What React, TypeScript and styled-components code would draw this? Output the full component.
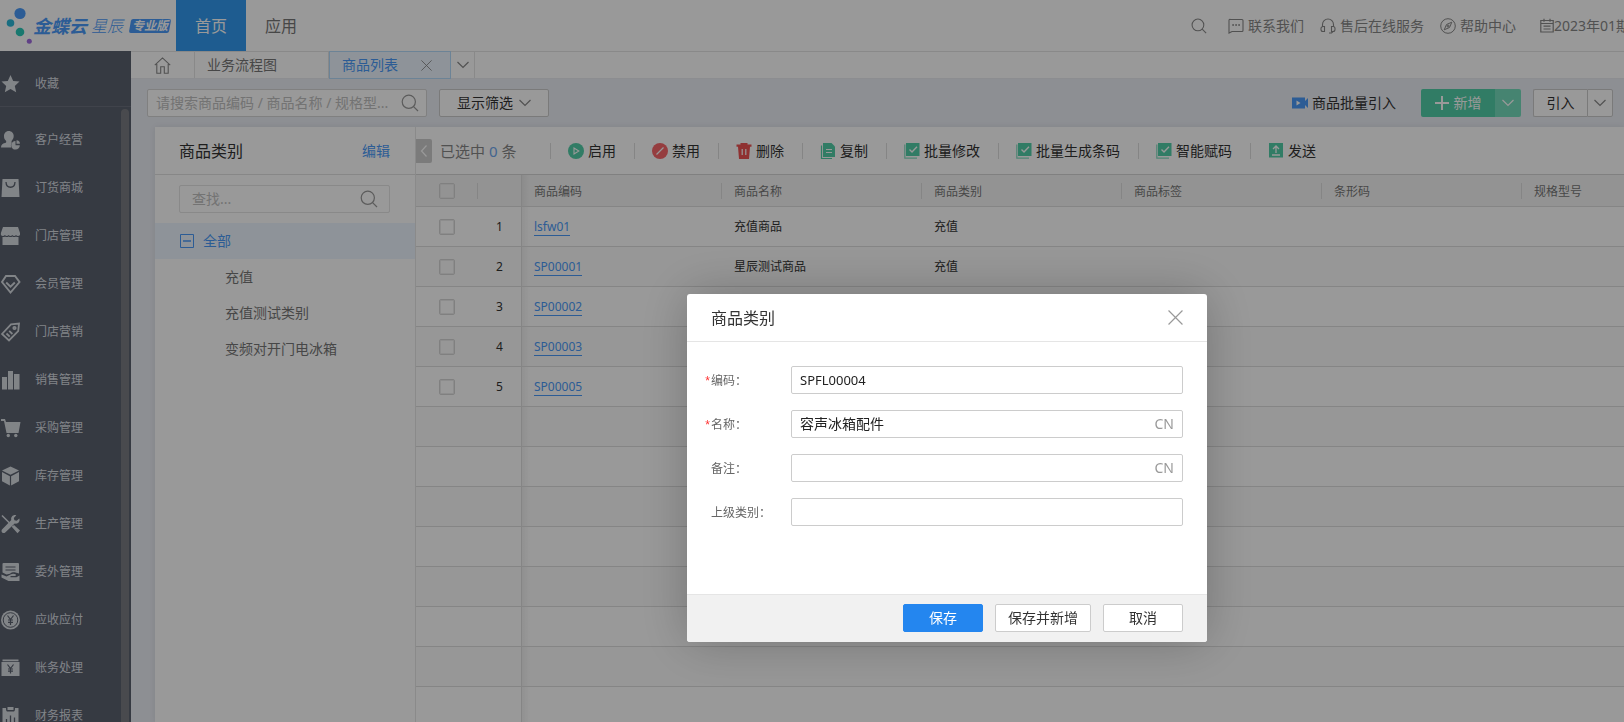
import React from "react";
import styled, { createGlobalStyle, css } from "styled-components";

const GlobalStyle = createGlobalStyle`
  * { box-sizing: border-box; }
  body {
    margin: 0;
    font-family: "Noto Sans", "Noto Sans CJK SC", sans-serif;
    font-size: 14px;
    line-height: 20px;
    color: #333;
  }
  button, input { font: inherit; color: inherit; }
  button { padding: 0; margin: 0; border: 0; background: none; cursor: pointer; }
  a { color: inherit; text-decoration: none; }
  svg { display: block; flex: none; }
`;

const BLUE = "#4a9af8";
const GREEN = "#52cfa8";

/* ---------- shell ---------- */

const Page = styled.div`
  display: flex;
  flex-direction: column;
  height: 100vh;
  overflow: hidden;
  background: #ebeef5;
`;

const Header = styled.header`
  display: flex;
  flex: none;
  align-items: center;
  height: 51px;
  background: #fff;
  overflow: hidden;
`;

const Logo = styled.a`
  display: flex;
  align-items: center;
  flex: none;
  width: 176px;
  height: 51px;
  color: ${BLUE};
  font-style: italic;
  white-space: nowrap;
`;

const Brand = styled.span`
  font-size: 18px;
  font-weight: 700;
`;

const SubBrand = styled.span`
  margin-left: 4px;
  font-size: 16px;
  font-weight: 300;
`;

const Edition = styled.span`
  position: relative;
  z-index: 0;
  margin-left: 7px;
  padding: 0 2px;
  font-size: 12px;
  line-height: 14px;
  font-weight: 700;
  color: #fff;
  &::before {
    content: "";
    position: absolute;
    inset: 0;
    z-index: -1;
    border-radius: 2px;
    background: ${BLUE};
    transform: skewX(-10deg);
  }
`;

const MainNav = styled.nav`
  display: flex;
  height: 100%;
`;

const NavLink = styled.a<{ $active?: boolean }>`
  display: flex;
  align-items: center;
  justify-content: center;
  width: 70px;
  font-size: 16px;
  color: ${(p) => (p.$active ? "#fff" : "#777")};
  background: ${(p) => (p.$active ? "#329af0" : "transparent")};
`;

const HeaderTools = styled.div`
  display: flex;
  flex: 1;
  justify-content: flex-end;
  align-items: center;
  color: #888;
`;

const ToolLink = styled.a`
  display: flex;
  flex: none;
  align-items: center;
  gap: 4px;
  margin-right: 16px;
  white-space: nowrap;
`;

const SearchLink = styled(ToolLink)`
  margin-right: 21px;
`;

const Period = styled.a`
  display: flex;
  flex: 0 0 84px;
  align-items: center;
  margin-left: 8px;
  overflow: hidden;
  white-space: nowrap;
`;

const Body = styled.div`
  display: flex;
  flex: 1;
  min-height: 0;
`;

/* ---------- side menu ---------- */

const Sidebar = styled.aside`
  display: flex;
  flex-direction: column;
  flex: 0 0 131px;
  color: #d8dce2;
  background: #5a616e;
  font-size: 12px;
`;

const Favorites = styled.div`
  display: flex;
  flex: none;
  height: 56px;
  padding-top: 11px;
  border-bottom: 1px solid #6b717d;
`;

const MenuScroll = styled.nav`
  display: flex;
  flex: 1;
  min-height: 0;
  overflow: hidden;
  padding: 2px 2px 0 0;
`;

const MenuList = styled.div`
  flex: 1;
  padding-top: 7px;
`;

const ScrollThumb = styled.div`
  width: 8px;
  border-radius: 4px 4px 0 0;
  background: #7b7c83;
`;

const MenuItem = styled.a<{ $compact?: boolean }>`
  display: flex;
  align-items: center;
  gap: 14px;
  height: ${(p) => (p.$compact ? 44 : 48)}px;
`;

/* ---------- work area ---------- */

const Work = styled.main`
  display: flex;
  flex: 1;
  flex-direction: column;
  min-width: 0;
`;

const TabBar = styled.div`
  display: flex;
  flex: none;
  height: 28px;
  background: #fff;
  border-top: 1px solid #e4e4e4;
  border-bottom: 1px solid #e9ebf0;
  color: #777;
`;

const tabBase = css`
  display: flex;
  align-items: center;
  border-right: 1px solid #e4e4e4;
`;

const HomeTab = styled.button`
  ${tabBase}
  justify-content: center;
  width: 64px;
  color: #888;
`;

const Tab = styled.div<{ $active?: boolean }>`
  ${tabBase}
  justify-content: space-between;
  width: ${(p) => (p.$active ? 122 : 134)}px;
  padding: 0 18px 0 12px;
  ${(p) =>
    p.$active &&
    css`
      margin: -1px 0;
      color: ${BLUE};
      background: #edf6ff;
      border: 1px solid #b5dafb;
    `}
`;

const TabClose = styled.button`
  color: #888;
`;

const MoreTabs = styled.button`
  ${tabBase}
  justify-content: center;
  width: 24px;
  color: #888;
`;

const Toolbar = styled.div`
  display: flex;
  flex: none;
  align-items: center;
  height: 48px;
  padding: 0 11px 0 16px;
`;

const SearchBox = styled.label<{ $wide?: boolean }>`
  display: flex;
  align-items: center;
  flex: none;
  width: ${(p) => (p.$wide ? "280px" : "auto")};
  height: 28px;
  padding: ${(p) => (p.$wide ? "0 7px 0 8px" : "0 11px 0 12px")};
  border: 1px solid ${(p) => (p.$wide ? "#d5d5d5" : "#e4e4e4")};
  border-radius: 2px;
  background: #fff;
  color: #999;
  input {
    flex: 1;
    width: 0;
    min-width: 0;
    padding: 0;
    border: 0;
    outline: 0;
    background: none;
  }
  input::placeholder { color: #c0c0c0; opacity: 1; }
`;

const PlainButton = styled.button`
  display: flex;
  align-items: center;
  justify-content: center;
  height: 28px;
  border: 1px solid #ccc;
  border-radius: 2px;
  background: #fff;
  svg { color: #888; }
`;

const FilterButton = styled(PlainButton)`
  gap: 6px;
  width: 110px;
  margin-left: 12px;
`;

const BatchImport = styled.a`
  display: flex;
  align-items: center;
  gap: 4px;
  margin: 0 25px 0 auto;
`;

const AddGroup = styled.div`
  display: flex;
  height: 28px;
  margin-right: 12px;
  border-radius: 2px;
  overflow: hidden;
  color: #fff;
`;

const AddButton = styled.button`
  display: flex;
  align-items: center;
  justify-content: center;
  gap: 5px;
  width: 74px;
  background: ${GREEN};
`;

const AddMore = styled.button`
  display: flex;
  align-items: center;
  justify-content: center;
  width: 26px;
  background: #76dcbc;
`;

const ImportButton = styled(PlainButton)`
  width: 54px;
  border-right: 0;
  border-radius: 2px 0 0 2px;
`;

const ImportMore = styled(PlainButton)`
  width: 26px;
  border-radius: 0 2px 2px 0;
`;

const Panels = styled.div`
  display: flex;
  flex: 1;
  min-height: 0;
  margin-left: 24px;
  background: #fff;
  box-shadow: 0 0 6px rgba(0, 0, 0, 0.08);
`;

const Categories = styled.section`
  flex: 0 0 261px;
  min-width: 0;
  border-right: 1px solid #e6e6e6;
`;

const CategoryHead = styled.div`
  display: flex;
  align-items: center;
  justify-content: space-between;
  height: 48px;
  padding: 0 25px 0 24px;
  border-bottom: 1px solid #e2e2e2;
`;

const Heading = styled.h2`
  margin: 0;
  font-size: 16px;
  font-weight: 400;
`;

const TextLink = styled.a`
  color: ${BLUE};
`;

const CategorySearch = styled.div`
  padding: 10px 25px 10px 24px;
`;

const Tree = styled.ul`
  margin: 0;
  padding: 0;
  list-style: none;
`;

const TreeRoot = styled.li`
  display: flex;
  align-items: center;
  gap: 9px;
  height: 36px;
  padding-left: 25px;
  color: ${BLUE};
  background: #edf6ff;
`;

const TreeChild = styled.li`
  height: 36px;
  padding: 8px 0 8px 70px;
  color: #777;
`;

const ListPanel = styled.section`
  flex: 1;
  min-width: 0;
  overflow: hidden;
`;

const ActionBar = styled.div`
  display: flex;
  align-items: center;
  height: 48px;
  border-bottom: 1px solid #d6d6d6;
`;

const Collapse = styled.button`
  display: flex;
  align-items: center;
  justify-content: center;
  width: 16px;
  height: 24px;
  border-radius: 0 2px 2px 0;
  background: #cecece;
  color: #fff;
`;

const Selected = styled.span`
  width: 118px;
  padding-left: 8px;
  font-size: 15px;
  color: #888;
  b { font-weight: 400; color: #6fa8ef; }
`;

const Action = styled.button`
  display: flex;
  align-items: center;
  gap: 4px;
  height: 16px;
  padding: 0 18px 0 17px;
  border-left: 1px solid #dedede;
  white-space: nowrap;
`;

const Grid = styled.table`
  width: 100%;
  table-layout: fixed;
  border-collapse: separate;
  border-spacing: 0;
  font-size: 12px;
`;

const HeadCell = styled.th<{ $sep?: boolean }>`
  height: 32px;
  padding: 2px 0 0 12px;
  text-align: left;
  font-weight: 400;
  color: #777;
  border-bottom: 1px solid #dedede;
  background: ${(p) =>
    p.$sep
      ? "linear-gradient(#dedede, #dedede) right center / 1px 16px no-repeat, #f6f6f6"
      : "#f6f6f6"};
`;

const Cell = styled.td`
  height: 40px;
  padding: 0 0 0 12px;
  border-bottom: 1px solid #dedede;
`;

const checkPad = css`
  padding: 0;
  text-align: center;
`;

const CheckHead = styled(HeadCell)`${checkPad}`;
const CheckCell = styled(Cell)`${checkPad}`;

const NumHead = styled(HeadCell)`
  border-right: 1px solid #dedede;
`;

const NumCell = styled(Cell)`
  padding: 0;
  text-align: center;
  border-right: 1px solid #dedede;
`;

const freezeShadow = css`
  background-image: linear-gradient(90deg, rgba(0, 0, 0, 0.05), transparent 8px);
`;

const CodeHead = styled(HeadCell)`
  background: linear-gradient(#dedede, #dedede) right center / 1px 16px no-repeat,
    linear-gradient(90deg, rgba(0, 0, 0, 0.05), transparent 8px), #f6f6f6;
`;
const CodeCell = styled(Cell)`${freezeShadow}`;

const Row = styled.tr`
  &:nth-child(even) { background: #fcfcfc; }
`;

const CodeLink = styled.a`
  display: inline-block;
  line-height: 16px;
  color: ${BLUE};
  border-bottom: 1px solid ${BLUE};
`;

const CheckBox = styled.input`
  appearance: none;
  display: block;
  width: 16px;
  height: 16px;
  margin: 0 auto;
  border: 1px solid #d6d6d6;
  border-radius: 2px;
  background: transparent;
  box-shadow: inset 0 0 0 1px #ebebeb;
`;

/* ---------- dialog ---------- */

const Mask = styled.div`
  position: fixed;
  inset: 0;
  display: flex;
  justify-content: center;
  align-items: flex-start;
  padding: 294px 0 0 270px;
  background: rgba(0, 0, 0, 0.4);
`;

const Dialog = styled.section`
  flex: none;
  width: 520px;
  border-radius: 3px;
  overflow: hidden;
  background: #fff;
  box-shadow: 0 0 50px rgba(0, 0, 0, 0.24);
`;

const DialogHead = styled.div`
  display: flex;
  align-items: center;
  justify-content: space-between;
  height: 48px;
  padding: 0 24px;
  border-bottom: 1px solid #e5e5e5;
`;

const CloseButton = styled.button`
  color: #999;
`;

const Form = styled.form`
  display: flex;
  flex-direction: column;
  gap: 16px;
  min-height: 252px;
  padding: 24px;
`;

const Field = styled.div`
  display: flex;
  align-items: center;
`;

const Label = styled.label`
  position: relative;
  flex: 0 0 80px;
  padding-top: 2px;
  font-size: 12px;
  color: #666;
`;

const Star = styled.span`
  position: absolute;
  right: 100%;
  padding-right: 1px;
  font-family: "Liberation Sans", sans-serif;
  color: #f33;
`;

const InputBox = styled.div<{ $latin?: boolean }>`
  display: flex;
  flex: 1;
  align-items: center;
  height: 28px;
  padding: 0 8px;
  border: 1px solid #ccc;
  border-radius: 2px;
  font-size: ${(p) => (p.$latin ? 13 : 14)}px;
  input {
    flex: 1;
    min-width: 0;
    padding: 0;
    border: 0;
    outline: 0;
    color: #222;
    background: none;
  }
`;

const Lang = styled.span`
  color: #999;
`;

const DialogFoot = styled.div`
  display: flex;
  align-items: flex-start;
  justify-content: flex-end;
  gap: 12px;
  height: 48px;
  padding: 9px 24px 0;
  border-top: 1px solid #e5e5e5;
  background: #f1f1f1;
`;

const FootButton = styled(PlainButton)<{ $primary?: boolean }>`
  min-width: 80px;
  padding: 0 12px;
  ${(p) =>
    p.$primary &&
    css`
      color: #fff;
      border-color: #2486ef;
      background: #2486ef;
    `}
`;

/* ---------- icons ---------- */

const LogoMark = () => (
  <svg width="33" height="50" viewBox="0 0 33 50">
    <circle cx="20" cy="12.5" r="5.6" fill={BLUE} />
    <circle cx="10.5" cy="22" r="3.8" fill="#2bb7d8" />
    <circle cx="20" cy="31" r="4.3" fill="#2bc9b9" />
    <circle cx="29.3" cy="40.3" r="2.5" fill="#a06be0" />
  </svg>
);

const Magnifier = ({ size = 18 }: { size?: number }) => (
  <svg width={size} height={size} viewBox="0 0 18 18" fill="none" stroke="currentColor" strokeWidth="1.2">
    <circle cx="7.8" cy="7.8" r="6.6" />
    <path d="M12.6 12.6 17 17" />
  </svg>
);

const Chevron = ({ dir = "down" }: { dir?: "down" | "left" }) =>
  dir === "down" ? (
    <svg width="12" height="8" viewBox="0 0 12 8" fill="none" stroke="currentColor" strokeWidth="1.2">
      <path d="M.5 1 6 6.5 11.5 1" />
    </svg>
  ) : (
    <svg width="8" height="12" viewBox="0 0 8 12" fill="none" stroke="currentColor" strokeWidth="1.2">
      <path d="M6.5.5 1.5 6l5 5.5" />
    </svg>
  );

const Cross = ({ size }: { size: number }) => (
  <svg width={size} height={size} viewBox="0 0 14 14" fill="none" stroke="currentColor" strokeWidth="1.1">
    <path d="M.5.5l13 13M13.5.5l-13 13" />
  </svg>
);

const HomeIcon = () => (
  <svg width="17" height="17" viewBox="0 0 17 17" fill="none" stroke="currentColor" strokeWidth="1.1">
    <path d="M.8 8.2 8.5.9l7.7 7.3M2.8 7v9.2h3.9V9.8h3.6v6.400h3.900V7" />
  </svg>
);

const ChatIcon = () => (
  <svg width="16" height="16" viewBox="0 0 16 16" fill="none" stroke="currentColor" strokeWidth="1.1">
    <path d="M2.500 1.500h11.500a1 1 0 0 1 1 1v10a1 1 0 0 1-1 1H4L1 15V2.500a1 1 0 0 1 1.500-1z" />
    <path d="M4.200 7h1.800M7.200 7H9M10.200 7H12" strokeWidth="1.6" />
  </svg>
);

const HeadsetIcon = () => (
  <svg width="16" height="16" viewBox="0 0 16 16" fill="none" stroke="currentColor" strokeWidth="1.1">
    <path d="M2.500 8.500V6.500a5.500 5.500 0 0 1 11 0v2M4.500 8v5.500H3a2 2 0 0 1-2-2v-1a2 2 0 0 1 2-2h1.500M11.500 8v5.500H13a2 2 0 0 0 2-2v-1a2 2 0 0 0-2-2h-1.500M13 13.500 11.500 15H9" />
  </svg>
);

const CompassIcon = () => (
  <svg width="16" height="16" viewBox="0 0 16 16" fill="none" stroke="currentColor" strokeWidth="1">
    <circle cx="8" cy="8" r="7.3" />
    <path d="M11.800 4.200 9.500 9.500 4.200 11.800 6.500 6.500z" />
    <circle cx="8" cy="8" r="1" />
  </svg>
);

const CalendarIcon = () => (
  <svg width="14" height="16" viewBox="0 0 14 16" fill="none" stroke="currentColor" strokeWidth="1.2">
    <path d="M.8 2.500h12.400V14H.8zM.8 5.500h12.400M4 .8v3M10 .8v3M3.500 8.200h7M3.500 11h7" />
  </svg>
);

const VideoIcon = () => (
  <svg width="16" height="12" viewBox="0 0 16 12" fill={BLUE}>
    <path d="M0 .5h13v11H0zM13 4l3-3v10l-3-3z" />
    <path d="M4.500 3.500v5L8.500 6z" fill="#fff" />
  </svg>
);

const PlusIcon = () => (
  <svg width="14" height="14" viewBox="0 0 14 14" stroke="currentColor" strokeWidth="2">
    <path d="M7 0v14M0 7h14" />
  </svg>
);

const MinusBox = () => (
  <svg width="14" height="14" viewBox="0 0 14 14" fill="none" stroke={BLUE}>
    <path d="M.5.5h13v13H.5z" />
    <path d="M3 7h8" strokeWidth="1.5" />
  </svg>
);

const EnableIcon = () => (
  <svg width="16" height="16" viewBox="0 0 16 16">
    <circle cx="8" cy="8" r="8" fill={GREEN} />
    <path d="M6 5v6l4.800-3z" fill="none" stroke="#fff" strokeWidth="1.1" />
  </svg>
);

const DisableIcon = () => (
  <svg width="16" height="16" viewBox="0 0 16 16">
    <circle cx="8" cy="8" r="8" fill="#f8666a" />
    <path d="M4.500 11.500l7-7" stroke="#fff" strokeWidth="1.3" />
  </svg>
);

const TrashIcon = () => (
  <svg width="16" height="16" viewBox="0 0 16 16" fill="#ee5353">
    <path d="M4.500 0h7v1.500h4v2.200h-1.500L13 16H3L2 3.700H.5V1.500h4z" />
    <path d="M6.200 6v6M9.800 6v6" stroke="#fff" strokeWidth="1.2" />
  </svg>
);

const CopyIcon = () => (
  <svg width="16" height="16" viewBox="0 0 16 16">
    <path d="M1.500 2.500v13H12" fill="none" stroke={GREEN} strokeWidth="1.2" />
    <path d="M3 0h8.500L15 3.500V14H3z" fill={GREEN} />
    <path d="M6 6.500h6M6 9.500h6" stroke="#fff" strokeWidth="1.2" />
  </svg>
);

const BatchIcon = () => (
  <svg width="16" height="16" viewBox="0 0 16 16">
    <path d="M.8 1.500v13.700H13" fill="none" stroke={GREEN} strokeWidth="1.2" opacity=".7" />
    <path d="M2 0h13.500v13H2z" fill={GREEN} />
    <path d="M5.500 6.500 8 9l5-5.200" fill="none" stroke="#fff" strokeWidth="1.4" />
  </svg>
);

const SendIcon = () => (
  <svg width="16" height="16" viewBox="0 0 16 16">
    <path d="M1 0h14v14.500H1z" fill={GREEN} />
    <path d="M8 10V3.500M5 6l3-3 3 3M4 12h8" fill="none" stroke="#fff" strokeWidth="1.3" />
  </svg>
);

const HOLE = "#5a616e";

const menuIcons: Record<string, React.ReactNode> = {
  star: <path d="M10.500 1l2.700 5.900 6.300.7-4.700 4.300 1.400 6.300L10.500 15l-5.700 3.200 1.400-6.300L1.500 7.600l6.300-.7z" />,
  customer: (
    <>
      <path d="M8.700 1c3 0 5 2.200 5 5 0 2-.9 3.800-2 4.700-.4 1.400 0 1.500 0 2.500-1 1.500-1 3-.3 4.300H1c0-3 1.500-3.800 4-4.500 1.300-.4 1.500-1.200 1-2.300C4.500 9.800 4 8 4 6c0-2.800 2-5 4.700-5z" />
      <path d="M15.500 11v4.200h4.300A4.300 4.300 0 1 1 15.500 11z" />
      <path d="M16.500 10.200a3.600 3.600 0 0 1 3.400 3.600h-3.400z" />
    </>
  ),
  bag: (
    <>
      <path d="M2.500 1h16l1 18h-18z" />
      <path d="M6 4c.3 7 8.700 7 9 0" fill="none" stroke={HOLE} strokeWidth="1.3" />
    </>
  ),
  store: (
    <>
      <path d="M3 1h15l2 6v2c-1 1.200-3 1.200-4 0-1 1.200-2.700 1.200-3.700 0-1 1.200-2.700 1.200-3.700 0-1 1.200-2.700 1.200-3.700 0-1 1.200-3 1.200-4 0V7z" />
      <path d="M2.500 11c1 .3 2 0 2.500-.5 1 .8 2.700.8 3.700 0 1 .8 2.700.8 3.700 0 1 .8 2.700.8 3.600 0 .7.500 1.500.8 2.500.5v8h-16z" />
    </>
  ),
  diamond: (
    <g fill="none" stroke="currentColor" strokeWidth="1.9">
      <path d="M6 2h9l4.500 6-9 10.500-8.500-10.500z" />
      <path d="M6.200 8.500l4.300 4.200 4.300-4.200" />
    </g>
  ),
  tag: (
    <g fill="none" stroke="currentColor" strokeWidth="1.8">
      <path d="M2 12 11 2.300l8-.8-.8 7.700L9 18.500zM6.500 11.500l3.200 3.200M9.200 8.800l3.200 3.200" />
      <circle cx="14.500" cy="6" r="1.2" />
    </g>
  ),
  bars: <path d="M2 7h5v12.500H2zM8 1h5v18.500H8zM14 4h5.500v15.500H14z" />,
  cart: (
    <>
      <path d="M1 1h4l1 3h14.500l-2 11H6.500L4 3H1z" />
      <circle cx="8.300" cy="17.500" r="1.700" />
      <circle cx="15.800" cy="17.500" r="1.700" />
    </>
  ),
  box: <path d="M10.500.5l8.500 4-8.500 4.200L2 4.500zM2 6l7.900 4.200v9.300L2 15.200zM19 6v9.200l-7.900 4.300v-9.300z" />,
  tools: (
    <>
      <path d="M2 1.500 9.500 9M12.500 12l5.500 5.500" stroke="currentColor" strokeWidth="1.6" />
      <path d="M12 13l2-2 6 5.500-2.500 2.800z" />
      <path d="M19.300 4.500l-2.600 2.300-2.300-.6-.6-2.300L16.300 1.200c-3-.9-5.800 1.500-5 4.800L2 15.500c-.8 1-.5 2.300.2 3 .8.800 2.200.8 3 0l9.500-9c3.300.8 5.700-2 4.600-5z" />
    </>
  ),
  handDoc: (
    <>
      <path d="M3.500 1h14.500a1 1 0 0 1 1 1v9.500L15.500 10.500c-2-.4-4 0-5.500 1.200L6.500 12.500l-4-2V2a1 1 0 0 1 1-1z" />
      <path d="M5.500 5h10M5.500 8h10" stroke={HOLE} strokeWidth="1" />
      <path d="M1.500 12.500l5 2 4-2c2-1 4-.8 5.500 0l-.5 1.500h-5v1.200h6l3-1.700V19h-11l-7-3.500z" />
    </>
  ),
  coin: (
    <>
      <circle cx="10.500" cy="10" r="9.500" />
      <circle cx="10.500" cy="10" r="7.300" fill="none" stroke={HOLE} />
      <path d="M7.500 5.500l3 4 3-4M10.500 9.500v5.500M8 10h5M8 12.300h5" fill="none" stroke={HOLE} strokeWidth="1.2" />
    </>
  ),
  ledger: (
    <>
      <path d="M2.500 1.500h16v1.700h-16zM1.500 4h18v14h-18z" />
      <path d="M7.500 6.500l3 4 3-4M10.500 10.500v5M8 11h5M8 13.200h5" fill="none" stroke={HOLE} strokeWidth="1.2" />
    </>
  ),
  report: (
    <>
      <path d="M2.500 2H6c0 3 .5 3.500 2 3.500h5c1.500 0 2-.5 2-3.500h3.500v17h-16z" />
      <path d="M7.500 1h6v3h-6z" />
      <path d="M6.500 13v6M10.500 9.500V19M14.500 11.500V19" stroke={HOLE} strokeWidth="1.3" />
    </>
  ),
};

const MenuIcon = ({ name }: { name: string }) => (
  <svg width="21" height="20" viewBox="0 0 21 20" fill="currentColor">
    {menuIcons[name]}
  </svg>
);

/* ---------- data ---------- */

const menu = [
  ["customer", "客户经营"],
  ["bag", "订货商城"],
  ["store", "门店管理"],
  ["diamond", "会员管理"],
  ["tag", "门店营销"],
  ["bars", "销售管理"],
  ["cart", "采购管理"],
  ["box", "库存管理"],
  ["tools", "生产管理"],
  ["handDoc", "委外管理"],
  ["coin", "应收应付"],
  ["ledger", "账务处理"],
  ["report", "财务报表"],
];

const actions: [React.ReactNode, string][] = [
  [<EnableIcon />, "启用"],
  [<DisableIcon />, "禁用"],
  [<TrashIcon />, "删除"],
  [<CopyIcon />, "复制"],
  [<BatchIcon />, "批量修改"],
  [<BatchIcon />, "批量生成条码"],
  [<BatchIcon />, "智能赋码"],
  [<SendIcon />, "发送"],
];

const products = [
  { code: "lsfw01", name: "充值商品", category: "充值" },
  { code: "SP00001", name: "星辰测试商品", category: "充值" },
  { code: "SP00002", name: "", category: "" },
  { code: "SP00003", name: "", category: "" },
  { code: "SP00005", name: "", category: "" },
];

const blankRows = Array.from({ length: 12 }, (_, i) => i);

const fields = [
  { id: "code", label: "编码：", value: "SPFL00004", required: true, lang: false, latin: true },
  { id: "name", label: "名称：", value: "容声冰箱配件", required: true, lang: true, latin: false },
  { id: "remark", label: "备注：", value: "", required: false, lang: true, latin: false },
  { id: "parent", label: "上级类别：", value: "", required: false, lang: false, latin: false },
];

/* ---------- page ---------- */

const TopBar = () => (
  <Header>
    <Logo href="#">
      <LogoMark />
      <Brand>金蝶云</Brand>
      <SubBrand>星辰</SubBrand>
      <Edition>专业版</Edition>
    </Logo>
    <MainNav>
      <NavLink href="#" $active>首页</NavLink>
      <NavLink href="#">应用</NavLink>
    </MainNav>
    <HeaderTools>
      <SearchLink href="#" aria-label="搜索"><Magnifier size={16} /></SearchLink>
      <ToolLink href="#"><ChatIcon />联系我们</ToolLink>
      <ToolLink href="#"><HeadsetIcon />售后在线服务</ToolLink>
      <ToolLink href="#"><CompassIcon />帮助中心</ToolLink>
      <Period href="#"><CalendarIcon />2023年01期</Period>
    </HeaderTools>
  </Header>
);

const SideMenu = () => (
  <Sidebar>
    <Favorites>
      <MenuItem href="#" $compact><MenuIcon name="star" />收藏</MenuItem>
    </Favorites>
    <MenuScroll>
      <MenuList>
        {menu.map(([icon, text]) => (
          <MenuItem href="#" key={text}><MenuIcon name={icon} />{text}</MenuItem>
        ))}
      </MenuList>
      <ScrollThumb />
    </MenuScroll>
  </Sidebar>
);

const CategoryPanel = () => (
  <Categories>
    <CategoryHead>
      <Heading>商品类别</Heading>
      <TextLink href="#">编辑</TextLink>
    </CategoryHead>
    <CategorySearch>
      <SearchBox>
        <input placeholder="查找..." aria-label="查找" />
        <Magnifier />
      </SearchBox>
    </CategorySearch>
    <Tree>
      <TreeRoot><MinusBox />全部</TreeRoot>
      <TreeChild>充值</TreeChild>
      <TreeChild>充值测试类别</TreeChild>
      <TreeChild>变频对开门电冰箱</TreeChild>
    </Tree>
  </Categories>
);

const ProductList = () => (
  <ListPanel>
    <ActionBar>
      <Collapse aria-label="收起"><Chevron dir="left" /></Collapse>
      <Selected>已选中 <b>0</b> 条</Selected>
      {actions.map(([icon, text]) => (
        <Action key={text}>{icon}{text}</Action>
      ))}
    </ActionBar>
    <Grid>
      <colgroup>
        <col width="62" />
        <col width="44" />
        <col width="200" />
        <col width="200" />
        <col width="200" />
        <col width="200" />
        <col width="200" />
        <col />
      </colgroup>
      <thead>
        <tr>
          <CheckHead $sep><CheckBox type="checkbox" aria-label="全选" /></CheckHead>
          <NumHead />
          <CodeHead>商品编码</CodeHead>
          <HeadCell $sep>商品名称</HeadCell>
          <HeadCell $sep>商品类别</HeadCell>
          <HeadCell $sep>商品标签</HeadCell>
          <HeadCell $sep>条形码</HeadCell>
          <HeadCell>规格型号</HeadCell>
        </tr>
      </thead>
      <tbody>
        {products.map((p, i) => (
          <Row key={p.code}>
            <CheckCell><CheckBox type="checkbox" aria-label={p.code} /></CheckCell>
            <NumCell>{i + 1}</NumCell>
            <CodeCell><CodeLink href="#">{p.code}</CodeLink></CodeCell>
            <Cell>{p.name}</Cell>
            <Cell>{p.category}</Cell>
            <Cell /><Cell /><Cell />
          </Row>
        ))}
        {blankRows.map((i) => (
          <Row key={i}>
            <CheckCell /><NumCell /><CodeCell /><Cell /><Cell /><Cell /><Cell /><Cell />
          </Row>
        ))}
      </tbody>
    </Grid>
  </ListPanel>
);

const CategoryDialog = () => (
  <Mask>
    <Dialog role="dialog" aria-modal="true" aria-labelledby="dialog-title">
      <DialogHead>
        <Heading id="dialog-title">商品类别</Heading>
        <CloseButton aria-label="关闭"><Cross size={15} /></CloseButton>
      </DialogHead>
      <Form id="category-form">
        {fields.map((f) => (
          <Field key={f.id}>
            <Label htmlFor={f.id}>
              {f.required && <Star>*</Star>}
              {f.label}
            </Label>
            <InputBox $latin={f.latin}>
              <input id={f.id} defaultValue={f.value} />
              {f.lang && <Lang>CN</Lang>}
            </InputBox>
          </Field>
        ))}
      </Form>
      <DialogFoot>
        <FootButton $primary>保存</FootButton>
        <FootButton>保存并新增</FootButton>
        <FootButton>取消</FootButton>
      </DialogFoot>
    </Dialog>
  </Mask>
);

export default function App() {
  return (
    <>
      <GlobalStyle />
      <Page>
        <TopBar />
        <Body>
          <SideMenu />
          <Work>
            <TabBar>
              <HomeTab aria-label="主页"><HomeIcon /></HomeTab>
              <Tab>业务流程图</Tab>
              <Tab $active>
                商品列表
                <TabClose aria-label="关闭标签"><Cross size={11} /></TabClose>
              </Tab>
              <MoreTabs aria-label="更多标签"><Chevron /></MoreTabs>
            </TabBar>
            <Toolbar>
              <SearchBox $wide>
                <input placeholder="请搜索商品编码 / 商品名称 / 规格型..." aria-label="搜索商品" />
                <Magnifier />
              </SearchBox>
              <FilterButton>显示筛选<Chevron /></FilterButton>
              <BatchImport href="#"><VideoIcon />商品批量引入</BatchImport>
              <AddGroup>
                <AddButton><PlusIcon />新增</AddButton>
                <AddMore aria-label="更多新增"><Chevron /></AddMore>
              </AddGroup>
              <ImportButton>引入</ImportButton>
              <ImportMore aria-label="更多引入"><Chevron /></ImportMore>
            </Toolbar>
            <Panels>
              <CategoryPanel />
              <ProductList />
            </Panels>
          </Work>
        </Body>
      </Page>
      <CategoryDialog />
    </>
  );
}
